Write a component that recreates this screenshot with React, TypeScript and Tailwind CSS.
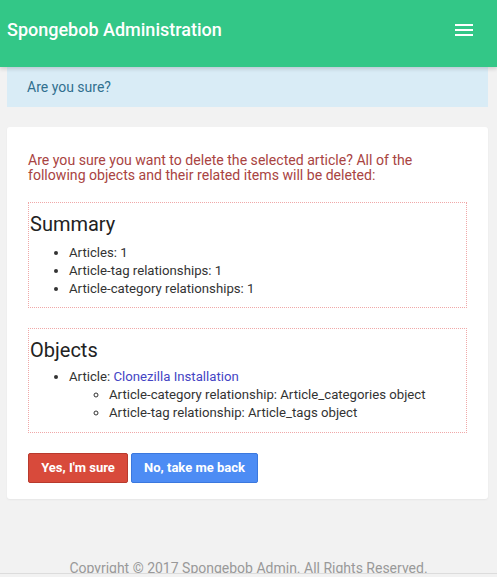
import React from "react";

export default function App() {
  const font = { fontFamily: "Roboto, 'Noto Sans', sans-serif" };
  return (
    <div className="min-h-[577px] bg-[#f2f2f2] text-[#333]" style={font}>
      <header className="h-[67px] bg-[#33c787] flex items-center justify-between pl-[7px] pr-[24px] pb-[7px] shadow-[0_2px_4px_rgba(0,0,0,0.15)] relative z-10">
        <div className="text-white text-[18px] font-medium leading-none">Spongebob Administration</div>
        <div className="flex flex-col gap-[3px] w-[18px]">
          <span className="block h-[2px] bg-white" />
          <span className="block h-[2px] bg-white" />
          <span className="block h-[2px] bg-white" />
        </div>
      </header>
      <div className="ml-[7px] mr-[9px] h-[40px] bg-[#d9ecf6] text-[#31708f] text-[14px] flex items-center pl-[20px]">
        Are you sure?
      </div>
      <div className="ml-[7px] mr-[9px] mt-[20px] bg-white rounded-[3px] shadow-[0_1px_2px_rgba(0,0,0,0.05)] px-[21px] pt-[26px] pb-[16px]">
        <p className="text-[#a94442] text-[14.1px] leading-[15px]">
          Are you sure you want to delete the selected article? All of the following objects and their related items will be deleted:
        </p>
        <div className="mt-[19px] border border-dotted border-[#f0a8a8] pt-[10px] pb-[9px]">
          <h2 className="text-[20px] leading-[22px] pl-[1px] text-[#222]">Summary</h2>
          <ul className="mt-[9px] pl-[40px] list-disc text-[13.2px] leading-[18px]">
            <li>Articles: 1</li>
            <li>Article-tag relationships: 1</li>
            <li>Article-category relationships: 1</li>
          </ul>
        </div>
        <div className="mt-[20px] border border-dotted border-[#f0a8a8] pt-[10px] pb-[10px]">
          <h2 className="text-[20px] leading-[22px] pl-[1px] text-[#222]">Objects</h2>
          <ul className="mt-[7px] pl-[40px] list-disc text-[13.2px] leading-[18px]">
            <li>
              Article: <a className="text-[#4444c4]">Clonezilla Installation</a>
              <ul className="pl-[40px] list-[circle]">
                <li>Article-category relationship: Article_categories object</li>
                <li>Article-tag relationship: Article_tags object</li>
              </ul>
            </li>
          </ul>
        </div>
        <div className="mt-[20px] flex gap-[3px]">
          <button className="h-[30px] w-[100px] bg-[#d84a3b] border border-[#b83a2d] rounded-[2px] text-white font-bold text-[13px]">
            Yes, I'm sure
          </button>
          <button className="h-[30px] w-[127px] bg-[#4d8cf4] border border-[#3b78de] rounded-[2px] text-white font-bold text-[13px]">
            No, take me back
          </button>
        </div>
      </div>
      <footer className="mt-[61px] text-center text-[#999] text-[14px] leading-[16px]">
        Copyright © 2017 Spongebob Admin. All Rights Reserved.
      </footer>
      <div className="fixed left-0 right-0 top-[573px] h-[4px] bg-[#f2f2f2] border-t border-[#dcdcdc]" />
    </div>
  );
}
